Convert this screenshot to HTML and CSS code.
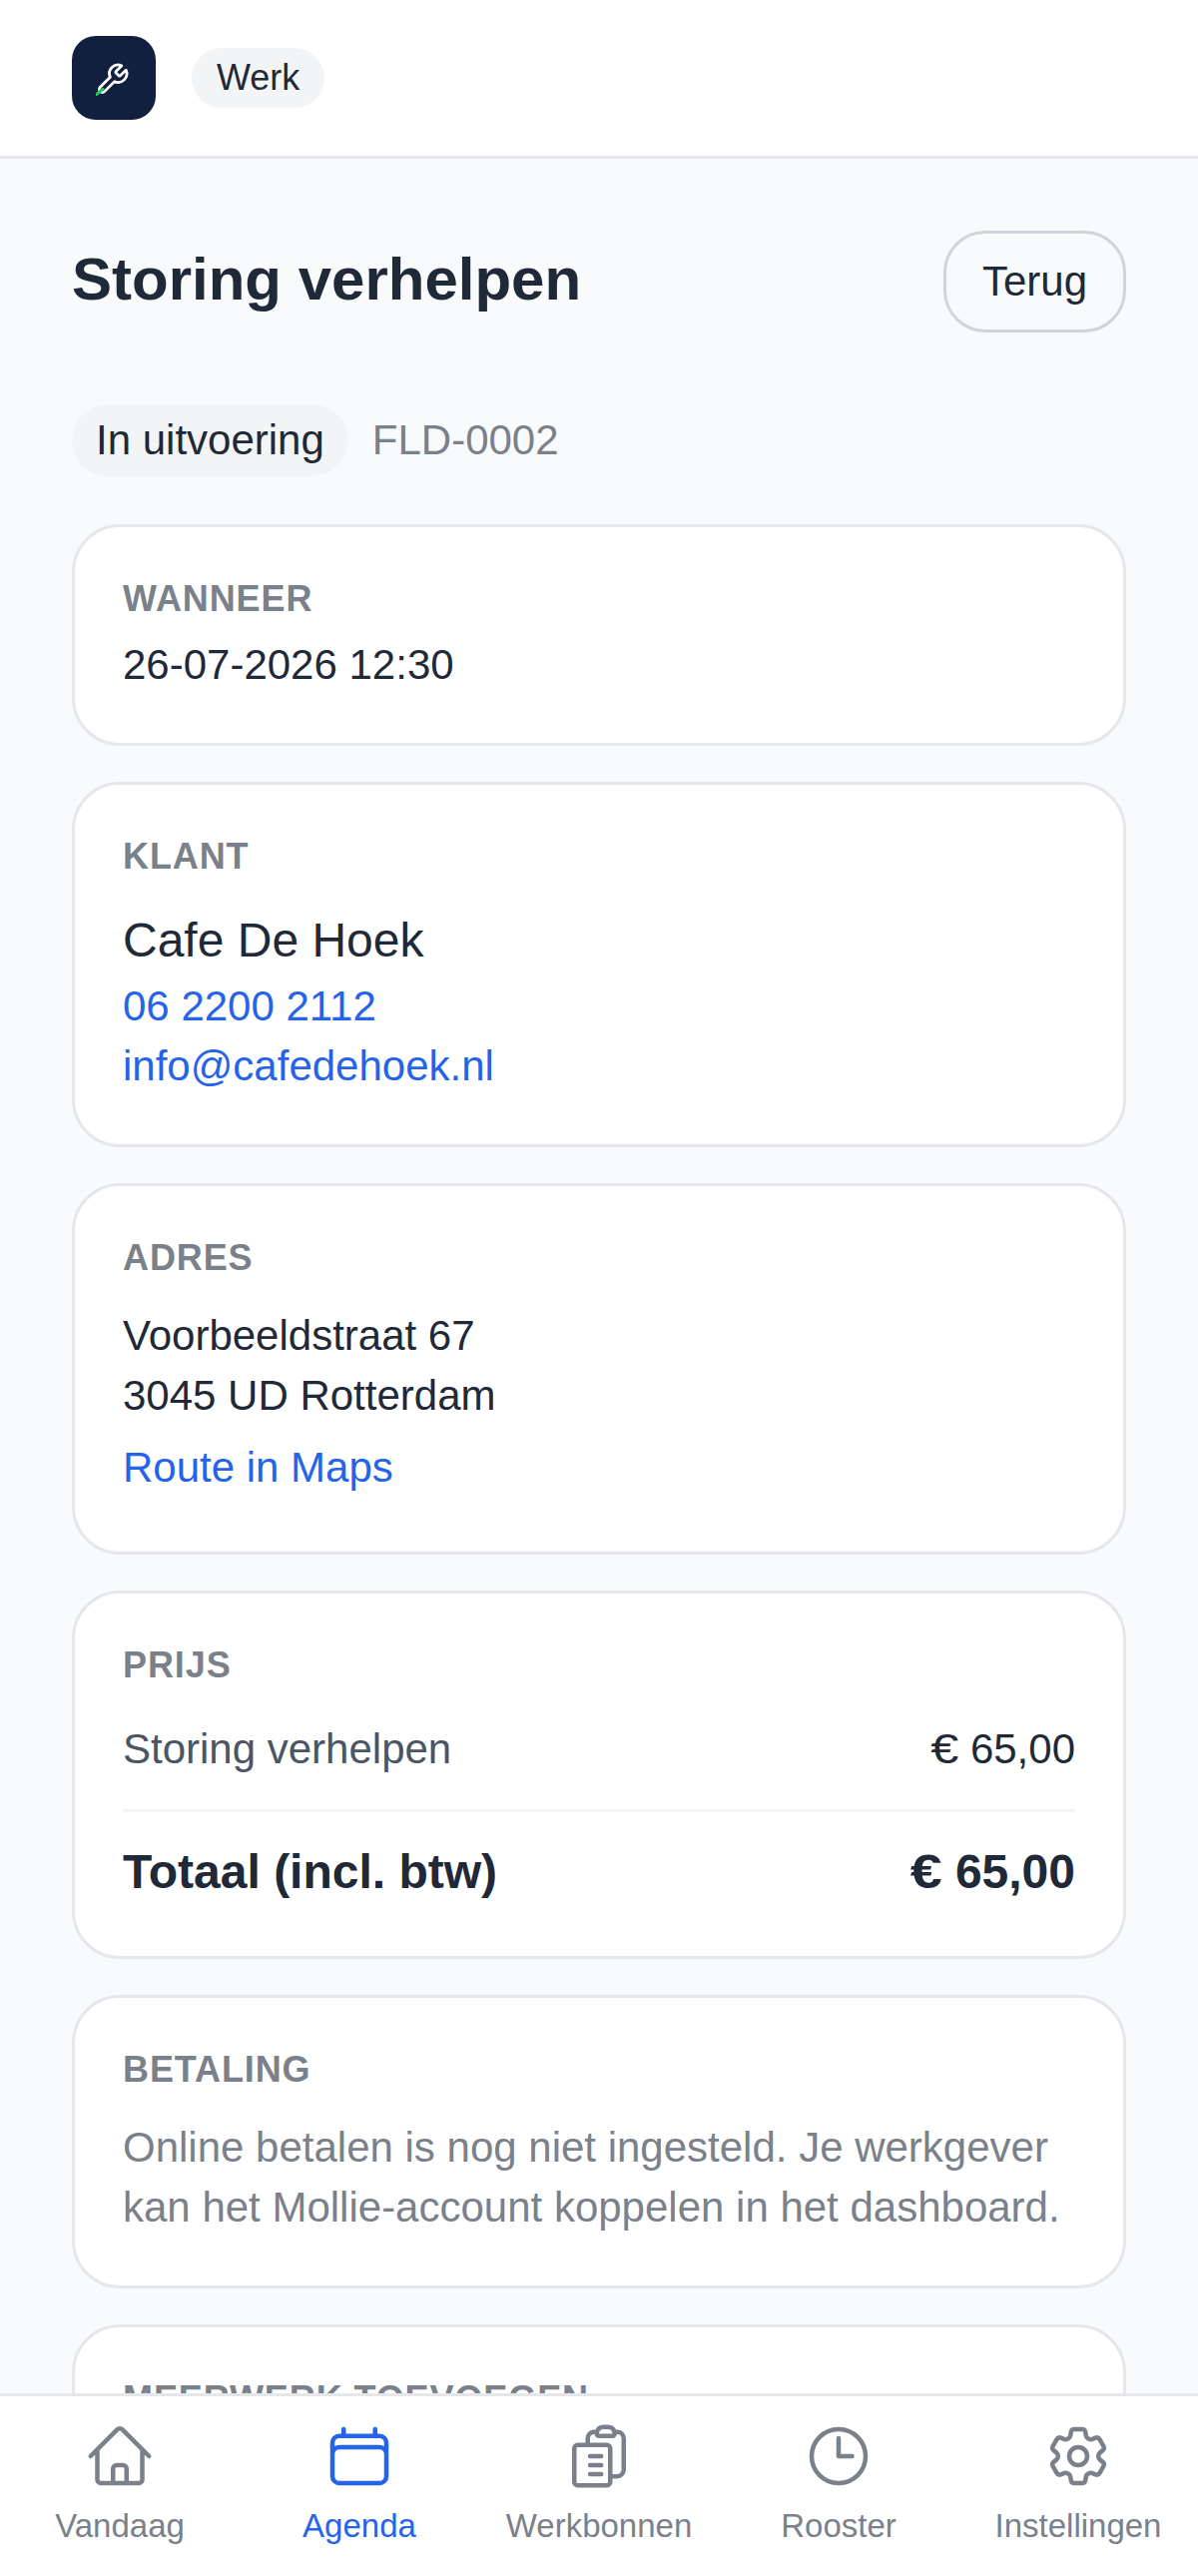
FILE: index.html
```html
<!DOCTYPE html>
<html>
<head>
    <title>Storing verhelpen</title>
    <link rel="stylesheet" href="styles.css">
</head>
<body>
    <header class="topbar">
        <div class="logo">
            <svg class="logo-icon" viewBox="0.62 -1.45 24.83 24.83" fill="none">
                <path d="M14.7 6.3a1 1 0 0 0 0 1.4l1.6 1.6a1 1 0 0 0 1.4 0l3.77-3.77a6 6 0 0 1-7.94 7.94l-6.91 6.91a2.12 2.12 0 0 1-3-3l6.91-6.91a6 6 0 0 1 7.94-7.94l-3.76 3.76z" stroke="#ffffff" stroke-width="1.9" stroke-linejoin="round"/>
                <path d="M1 22.4l4.3-3.6" stroke="#22c55e" stroke-width="2.2" stroke-linecap="round"/>
            </svg>
        </div>
        <span class="pill pill-small">Werk</span>
    </header>

    <main class="content">
        <div class="title-row">
            <h1>Storing verhelpen</h1>
            <a class="back-button">Terug</a>
        </div>

        <div class="status-row">
            <span class="pill">In uitvoering</span>
            <span class="job-number">FLD-0002</span>
        </div>

        <section class="card">
            <div class="label">Wanneer</div>
            <div class="value value-when">26-07-2026 12:30</div>
        </section>

        <section class="card">
            <div class="label label-spaced">Klant</div>
            <div class="customer-name">Cafe De Hoek</div>
            <a class="link">06 2200 2112</a>
            <a class="link">info@cafedehoek.nl</a>
        </section>

        <section class="card">
            <div class="label label-spaced">Adres</div>
            <div class="value">Voorbeeldstraat 67<br>3045 UD Rotterdam</div>
            <a class="link route-link">Route in Maps</a>
        </section>

        <section class="card">
            <div class="label">Prijs</div>
            <div class="price-row">
                <span class="price-name">Storing verhelpen</span>
                <span><span class="euro">€</span> 65,00</span>
            </div>
            <div class="total-row">
                <span>Totaal (incl. btw)</span>
                <span><span class="euro">€</span> 65,00</span>
            </div>
        </section>

        <section class="card">
            <div class="label label-spaced">Betaling</div>
            <p class="note">Online betalen is nog niet ingesteld. Je werkgever kan het Mollie-account koppelen in het dashboard.</p>
        </section>

        <section class="card">
            <div class="label label-spaced">Meerwerk toevoegen</div>
        </section>
    </main>

    <nav class="tabbar">
        <a class="tab">
            <svg class="tab-icon" viewBox="0 0 24 24" fill="none">
                <path d="m2.25 12 8.954-8.955c.44-.439 1.152-.439 1.591 0L21.75 12M4.5 9.75v10.125c0 .621.504 1.125 1.125 1.125H9.75v-4.875c0-.621.504-1.125 1.125-1.125h2.25c.621 0 1.125.504 1.125 1.125V21h4.125c.621 0 1.125-.504 1.125-1.125V9.75M8.25 21h8.25"/>
            </svg>
            <span>Vandaag</span>
        </a>
        <a class="tab active">
            <svg class="tab-icon" viewBox="0 0 24 24" fill="none">
                <path d="M6.75 3v2.25M17.25 3v2.25M3 18.75V7.5a2.25 2.25 0 0 1 2.25-2.25h13.5A2.25 2.25 0 0 1 21 7.5v11.25m-18 0A2.25 2.25 0 0 0 5.25 21h13.5A2.25 2.25 0 0 0 21 18.75m-18 0v-7.5A2.25 2.25 0 0 1 5.25 9h13.5A2.25 2.25 0 0 1 21 11.25v7.5"/>
            </svg>
            <span>Agenda</span>
        </a>
        <a class="tab">
            <svg class="tab-icon" viewBox="0 0 24 24" fill="none">
                <path d="M9 12h3.75M9 15h3.75M9 18h3.75m3 .75H18a2.25 2.25 0 0 0 2.25-2.25V6.108c0-1.135-.845-2.098-1.976-2.192a48.424 48.424 0 0 0-1.123-.08m-5.801 0c-.065.21-.1.433-.1.664 0 .414.336.75.75.75h4.5a.75.75 0 0 0 .75-.75 2.25 2.25 0 0 0-.1-.664m-5.8 0A2.251 2.251 0 0 1 13.5 2.25H15c1.012 0 1.867.668 2.15 1.586m-5.8 0c-.376.023-.75.05-1.124.08C9.095 4.01 8.25 4.973 8.25 6.108V8.25m0 0H4.875c-.621 0-1.125.504-1.125 1.125v11.25c0 .621.504 1.125 1.125 1.125h9.75c.621 0 1.125-.504 1.125-1.125V9.375c0-.621-.504-1.125-1.125-1.125H8.25Z"/>
            </svg>
            <span>Werkbonnen</span>
        </a>
        <a class="tab">
            <svg class="tab-icon" viewBox="0 0 24 24" fill="none">
                <path d="M12 6v6h4.5m4.5 0a9 9 0 1 1-18 0 9 9 0 0 1 18 0Z"/>
            </svg>
            <span>Rooster</span>
        </a>
        <a class="tab">
            <svg class="tab-icon" viewBox="0 0 24 24" fill="none">
                <path d="M9.594 3.94c.09-.542.56-.94 1.11-.94h2.593c.55 0 1.02.398 1.11.94l.213 1.281c.063.374.313.686.645.87.074.04.147.083.22.127.325.196.72.257 1.075.124l1.217-.456a1.125 1.125 0 0 1 1.37.49l1.296 2.247a1.125 1.125 0 0 1-.26 1.431l-1.003.827c-.293.241-.438.613-.43.992a7.723 7.723 0 0 1 0 .255c-.008.378.137.75.43.991l1.004.827c.424.35.534.955.26 1.43l-1.298 2.247a1.125 1.125 0 0 1-1.369.491l-1.217-.456c-.355-.133-.75-.072-1.076.124a6.47 6.47 0 0 1-.22.128c-.331.183-.581.495-.644.869l-.213 1.281c-.09.543-.56.94-1.11.94h-2.594c-.55 0-1.019-.398-1.11-.94l-.213-1.281c-.062-.374-.312-.686-.644-.87a6.52 6.52 0 0 1-.22-.127c-.325-.196-.72-.257-1.076-.124l-1.217.456a1.125 1.125 0 0 1-1.369-.49l-1.297-2.247a1.125 1.125 0 0 1 .26-1.431l1.004-.827c.292-.24.437-.613.43-.991a6.932 6.932 0 0 1 0-.255c.007-.38-.138-.751-.43-.992l-1.004-.827a1.125 1.125 0 0 1-.26-1.43l1.297-2.247a1.125 1.125 0 0 1 1.37-.491l1.216.456c.356.133.751.072 1.076-.124.072-.044.146-.086.22-.128.332-.183.582-.495.644-.869l.214-1.28Z"/>
                <path d="M15 12a3 3 0 1 1-6 0 3 3 0 0 1 6 0Z"/>
            </svg>
            <span>Instellingen</span>
        </a>
    </nav>
</body>
</html>
```

FILE: styles.css
```css
* {
    box-sizing: border-box;
}
html, body {
    height: 100%;
}
body {
    margin: 0;
    display: flex;
    flex-direction: column;
    overflow: hidden;
    background-color: #f9fafb;
    color: #1f2937;
    font-family: "Liberation Sans", Arial, sans-serif;
    font-size: 42px;
    line-height: 60px;
}

/* top bar */
.topbar {
    display: flex;
    align-items: center;
    gap: 36px;
    flex-shrink: 0;
    height: 159px;
    padding: 0 72px;
    background-color: #ffffff;
    border-bottom: 3px solid #e5e7eb;
}
.logo {
    display: flex;
    align-items: center;
    justify-content: center;
    width: 84px;
    height: 84px;
    border-radius: 24px;
    background-color: #11203f;
}
.logo-icon {
    width: 36px;
    height: 36px;
}
.pill {
    padding: 6px 24px;
    border-radius: 999px;
    background-color: #f3f4f6;
}
.pill-small {
    padding: 6px 25px;
    font-size: 36px;
    line-height: 48px;
}

/* page content */
.content {
    flex: 1;
    min-height: 0;
    overflow: hidden;
    padding: 72px 72px 0;
}
.title-row {
    display: flex;
    align-items: center;
    justify-content: space-between;
}
h1 {
    margin: 0 0 4px;
    font-size: 60px;
    line-height: 84px;
    font-weight: 700;
}
.back-button {
    padding: 18px 36px;
    border: 3px solid #d1d5db;
    border-radius: 42px;
}
.status-row {
    display: flex;
    align-items: center;
    gap: 24px;
    margin: 72px 0 48px;
}
.job-number {
    color: #7a818a;
}
.card {
    margin-bottom: 36px;
    padding: 48px;
    border: 3px solid #e5e7eb;
    border-radius: 48px;
    background-color: #ffffff;
}
.label {
    color: #7a818a;
    font-size: 36px;
    line-height: 48px;
    font-weight: 700;
    letter-spacing: 0.9px;
    text-transform: uppercase;
}
.label-spaced {
    margin-bottom: 24px;
}
.value-when {
    margin-top: 12px;
}
.customer-name {
    font-size: 48px;
    line-height: 72px;
}
.link {
    display: block;
    color: #2563eb;
}
.route-link {
    margin: 12px 0 6px;
}
.price-row {
    display: flex;
    justify-content: space-between;
    margin-top: 30px;
    padding-bottom: 30px;
    border-bottom: 3px solid #f3f4f6;
}
.price-name {
    color: #4b5563;
}
.euro {
    display: inline-block;
    transform: scaleX(1.2);
    transform-origin: right;
}
.total-row {
    display: flex;
    justify-content: space-between;
    padding-top: 24px;
    font-size: 48px;
    line-height: 72px;
    font-weight: 700;
}
.note {
    margin: 0;
    color: #7a818a;
}

/* bottom navigation */
.tabbar {
    display: grid;
    grid-template-columns: repeat(5, 1fr);
    flex-shrink: 0;
    height: 183px;
    padding-top: 24px;
    background-color: #ffffff;
    border-top: 3px solid #e5e7eb;
}
.tab {
    display: flex;
    flex-direction: column;
    align-items: center;
    gap: 10px;
    color: #7a818a;
    font-size: 33px;
    line-height: 48px;
}
.tab.active {
    color: #2563eb;
}
.tab-icon {
    width: 72px;
    height: 72px;
    stroke: currentColor;
    stroke-width: 1.5;
    stroke-linecap: round;
    stroke-linejoin: round;
}
```
